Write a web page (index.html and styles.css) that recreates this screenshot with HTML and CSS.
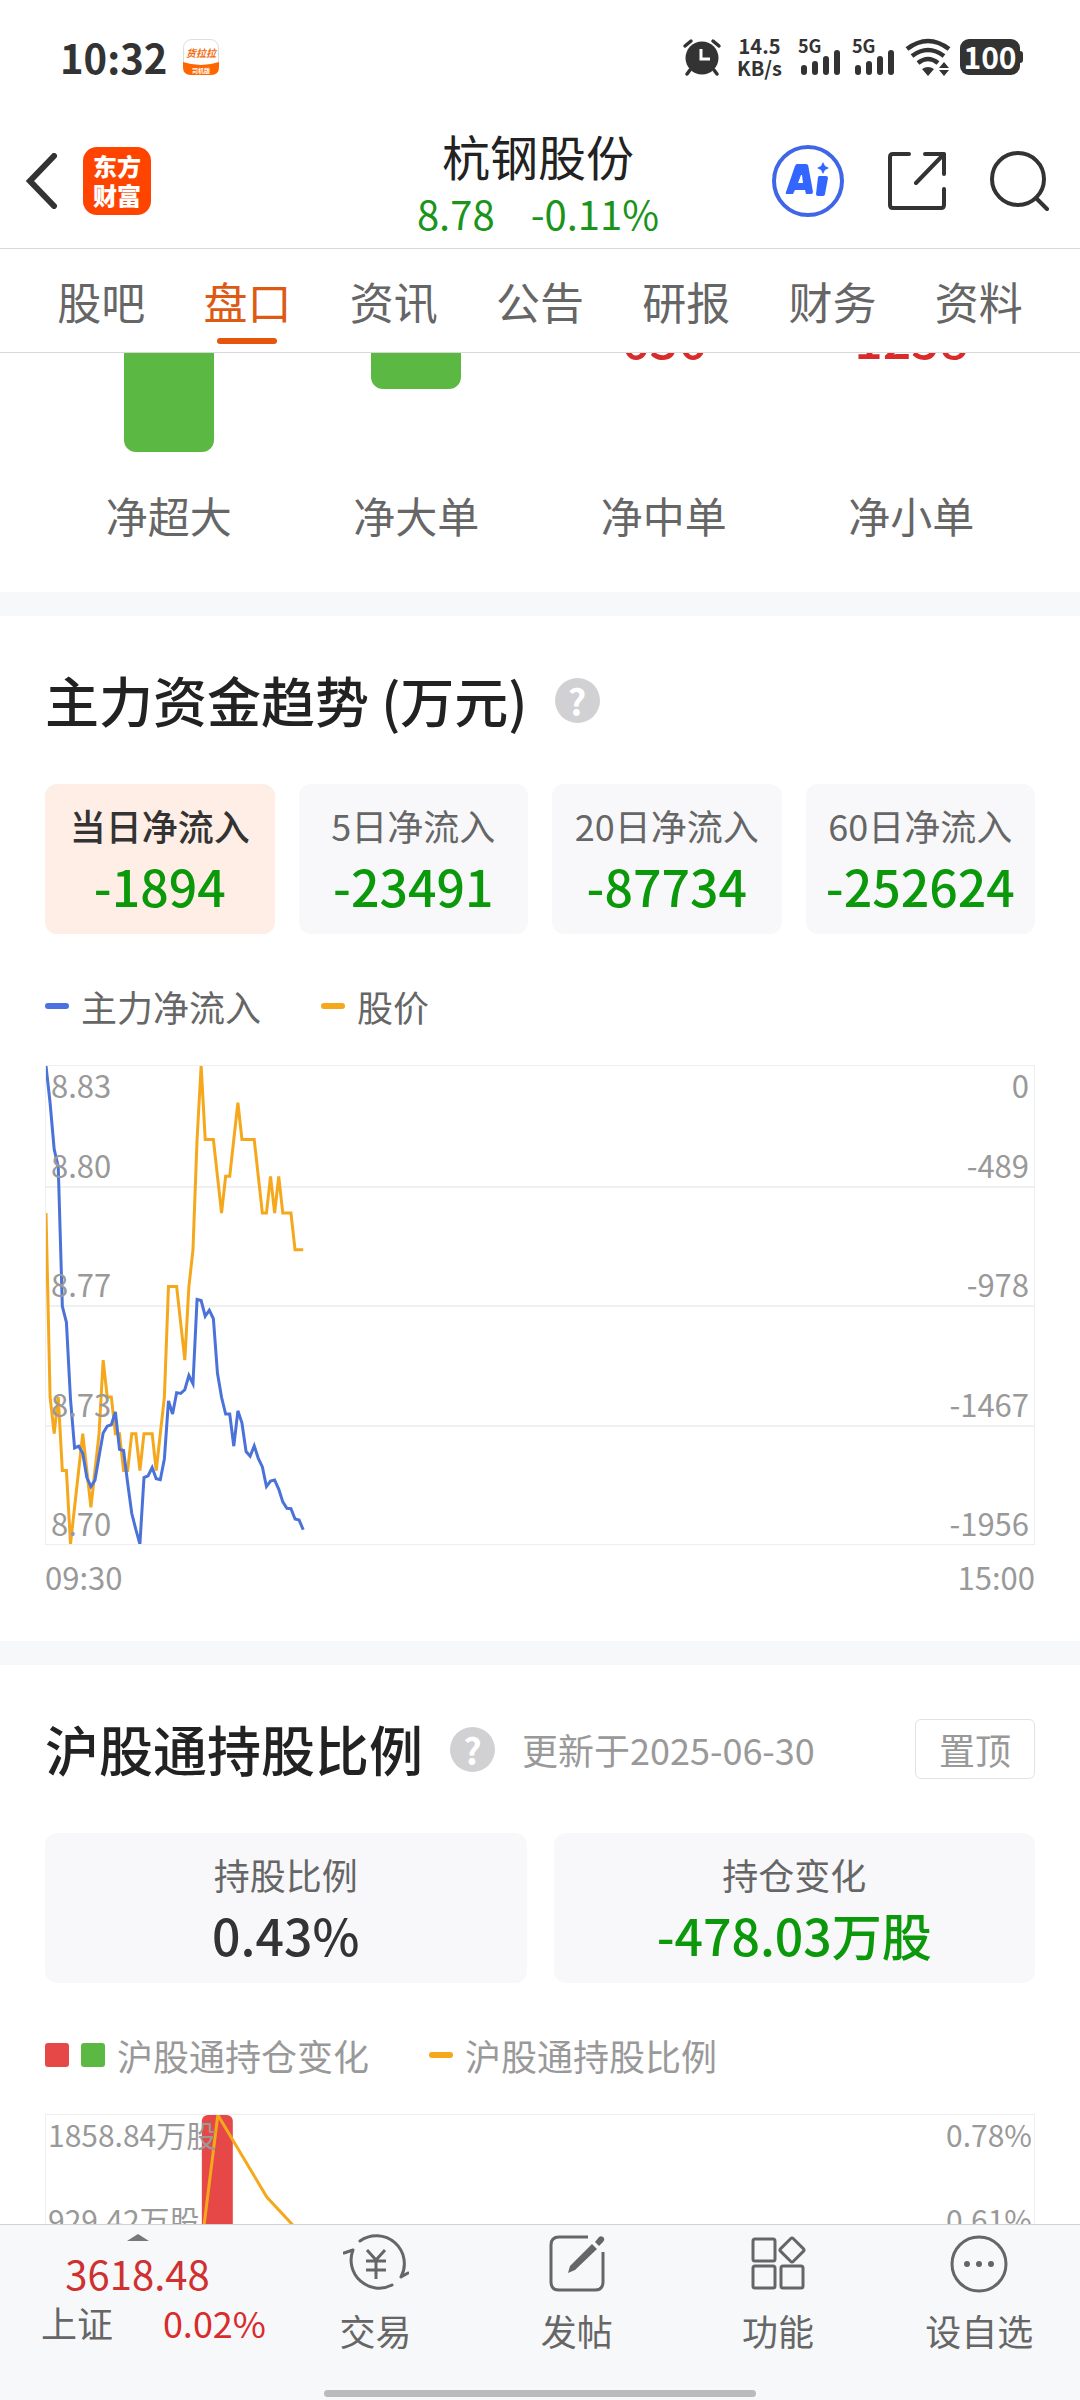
FILE: index.html
```html
<!DOCTYPE html>
<html lang="zh-CN">
<head>
<meta charset="utf-8">
<meta name="viewport" content="width=device-width, initial-scale=1">
<title>杭钢股份 8.78</title>
<link rel="stylesheet" href="styles.css">
</head>
<body>

<div class="status-bar">
  <span class="clock">10:32</span>
  <svg class="app-badge" viewBox="0 0 36 36">
    <rect x="0.5" y="0.5" width="35" height="35" rx="8" fill="#fff" stroke="#ddd"/>
    <path d="M0 23 Q18 29 36 23 V28 Q36 36 28 36 H8 Q0 36 0 28 Z" fill="#f60"/>
    <text x="18" y="18" font-size="10" font-weight="bold" font-style="italic" text-anchor="middle" fill="#f26a0c">货拉拉</text>
    <text x="18" y="34" font-size="6" font-weight="bold" text-anchor="middle" fill="#fff">司机版</text>
  </svg>
  <div class="status-icons">
    <svg width="38" height="38" viewBox="0 0 38 38">
      <circle cx="19" cy="20" r="16.5" fill="#333"/>
      <path d="M2 8 L8 3 M36 8 L30 3 M7 32 L4 36 M31 32 L34 36" stroke="#333" stroke-width="3.5" stroke-linecap="round"/>
      <path d="M18 11 V21 H27" fill="none" stroke="#fff" stroke-width="3"/>
    </svg>
    <span class="net-speed">14.5<br>KB/s</span>
    <svg width="44" height="38" viewBox="0 0 44 38">
      <text x="0" y="15" font-size="18" font-weight="bold" fill="#333">5G</text>
      <path d="M6 30 V34 M17 26 V34 M28 21 V34 M39 15 V34" stroke="#333" stroke-width="6" stroke-linecap="round"/>
    </svg>
    <svg width="44" height="38" viewBox="0 0 44 38">
      <text x="0" y="15" font-size="18" font-weight="bold" fill="#333">5G</text>
      <path d="M6 30 V34 M17 26 V34 M28 21 V34 M39 15 V34" stroke="#333" stroke-width="6" stroke-linecap="round"/>
    </svg>
    <svg width="44" height="38" viewBox="0 0 44 38">
      <g fill="none" stroke="#333" stroke-width="4.5">
        <path d="M1 11 Q22 -5 43 11"/>
        <path d="M6 18 Q22 6 38 18"/>
        <path d="M12 25 Q22 17 32 25"/>
      </g>
      <path d="M16 31 Q22 27 28 31 L22 38 Z M38 24 L43 30 H33 Z M38 38 L43 32 H33 Z" fill="#333"/>
    </svg>
    <span class="battery">100</span>
  </div>
</div>

<header class="top-bar">
  <div class="top-left">
    <button class="icon-button" aria-label="返回">
      <svg width="32" height="56" viewBox="0 0 32 56"><path d="M28 3 L4 28 L28 53" fill="none" stroke="#333" stroke-width="6" stroke-linecap="round"/></svg>
    </button>
    <a class="brand" href="#">东方<br>财富</a>
  </div>
  <div class="stock">
    <h1>杭钢股份</h1>
    <p class="quote"><span>8.78</span><span>-0.11%</span></p>
  </div>
  <div class="top-right">
    <button class="icon-button" aria-label="AI">
      <svg width="72" height="72" viewBox="0 0 72 72">
        <circle cx="36" cy="36" r="34" fill="none" stroke="#4066e8" stroke-width="4"/>
        <path fill="#3366ff" fill-rule="evenodd" d="M25 19 H34 Q36 19 36.300 21 L41 47 Q41 49 39 49 H34 L33 45 H23 L21 49 H15 Q13 49 14 47 L23 21 Q24 19 25 19 Z M29 30 L26 38 H31 L30 30 Z"/>
        <path fill="#3366ff" d="M47 31 H54 Q56 31 56 33 L53 49 Q53 51 51 51 H46 Q44 51 44 49 L46 32 Z M51 17 L53 21 L57 23 L53 25 L51 29 L49 25 L45 23 L49 21 Z"/>
      </svg>
    </button>
    <button class="icon-button" aria-label="分享">
      <svg width="58" height="58" viewBox="0 0 58 58">
        <path d="M21 2 H5 Q2 2 2 5 V53 Q2 56 5 56 H53 Q56 56 56 53 V37 M37 2 H56 V22 M56 2 L28 31" fill="none" stroke="#333" stroke-width="4" stroke-linecap="round" stroke-linejoin="round"/>
      </svg>
    </button>
    <button class="icon-button" aria-label="搜索">
      <svg width="60" height="60" viewBox="0 0 60 60">
        <circle cx="28" cy="28" r="26" fill="none" stroke="#333" stroke-width="4"/>
        <path d="M46 47 L57 58" stroke="#333" stroke-width="4" stroke-linecap="round"/>
      </svg>
    </button>
  </div>
</header>

<nav class="tabs">
  <a href="#">股吧</a>
  <a href="#" class="active">盘口</a>
  <a href="#">资讯</a>
  <a href="#">公告</a>
  <a href="#">研报</a>
  <a href="#">财务</a>
  <a href="#">资料</a>
</nav>

<main>
  <section class="orders">
    <div class="order">
      <div class="order-plot"><div class="order-bar" style="height: 159px"></div></div>
      <span>净超大</span>
    </div>
    <div class="order">
      <div class="order-plot"><div class="order-bar" style="height: 96px"></div></div>
      <span>净大单</span>
    </div>
    <div class="order">
      <div class="order-plot"><b>636</b></div>
      <span>净中单</span>
    </div>
    <div class="order">
      <div class="order-plot"><b>1258</b></div>
      <span>净小单</span>
    </div>
  </section>

  <section class="panel trend">
    <div class="panel-head">
      <h2>主力资金趋势 (万元)</h2>
      <button class="help" aria-label="说明">?</button>
    </div>
    <div class="cards cards-4">
      <button class="card selected"><span>当日净流入</span><b class="down">-1894</b></button>
      <button class="card"><span>5日净流入</span><b class="down">-23491</b></button>
      <button class="card"><span>20日净流入</span><b class="down">-87734</b></button>
      <button class="card"><span>60日净流入</span><b class="down">-252624</b></button>
    </div>
    <div class="legend">
      <span class="legend-item"><i class="dash blue"></i>主力净流入</span>
      <span class="legend-item"><i class="dash orange"></i>股价</span>
    </div>

    <div class="chart">
      <div class="grid-lines"><i></i><i></i><i></i><i></i></div>
      <!-- x: minutes since open, y: 0.01 yuan below 8.83 -->
      <svg class="plot" viewBox="0 0 242 13" preserveAspectRatio="none">
        <polyline class="line orange-line" points="0,4 1,9 2,10 3,9 4,11 5,11 6,13 7,12 8,11 9,10 10,11 11,12 12,11 13,10 14,8 15,9 16,9 17,10 18,10 19,11 20,11 21,10 22,10 23,11 24,10 25,10 26,10 27,11 28,10 29,9 30,6 31,6 32,6 33,7 34,8 35,6 36,5 37,2 38,0 39,2 40,2 41,2 42,3 43,4 44,3 45,3 46,2 47,1 48,2 49,2 50,2 51,2 52,3 53,4 54,4 55,3 56,4 57,3 58,4 59,4 60,4 61,5 62,5 63,5"/>
      </svg>
      <!-- x: minutes since open, y: net outflow -->
      <svg class="plot" viewBox="0 0 242 1339" preserveAspectRatio="none">
        <polyline class="line blue-line" points="0,0 1,103 2,233 3,283 4,673 5,718 6,933 7,1070 8,1065 9,1085 10,1153 11,1178 12,1160 13,1093 14,1028 15,1009 16,1005 17,969 18,1074 19,1077 20,1168 21,1253 22,1298 23,1339 24,1153 25,1148 26,1125 27,1156 28,1159 29,1100 30,938 31,975 32,915 33,917 34,907 35,867 36,890 37,654 38,657 39,701 40,684 41,708 42,861 43,928 44,975 45,975 46,1065 47,966 48,1000 49,1080 50,1093 51,1064 52,1099 53,1123 54,1178 55,1163 56,1160 57,1185 58,1221 59,1239 60,1240 61,1269 62,1272 63,1299"/>
      </svg>
      <div class="axis">
        <div><span>8.83</span><span>0</span></div>
        <div><span>8.80</span><span>-489</span></div>
        <div><span>8.77</span><span>-978</span></div>
        <div><span>8.73</span><span>-1467</span></div>
        <div><span>8.70</span><span>-1956</span></div>
      </div>
    </div>
    <div class="time-axis"><span>09:30</span><span>15:00</span></div>
  </section>

  <section class="panel">
    <div class="panel-head">
      <h2>沪股通持股比例</h2>
      <button class="help" aria-label="说明">?</button>
      <span class="updated">更新于2025-06-30</span>
      <button class="pin">置顶</button>
    </div>
    <div class="cards cards-2">
      <div class="card"><span>持股比例</span><b>0.43%</b></div>
      <div class="card"><span>持仓变化</span><b class="down">-478.03万股</b></div>
    </div>
    <div class="legend light">
      <span class="legend-item"><i class="square red"></i><i class="square green"></i>沪股通持仓变化</span>
      <span class="legend-item"><i class="dash orange"></i>沪股通持股比例</span>
    </div>
    <div class="chart holding">
      <svg class="plot" viewBox="0 0 989 478" preserveAspectRatio="none">
        <rect x="156" y="0" width="31" height="300" rx="6" fill="#e64848"/>
        <polyline class="line orange-line" points="157,120 172,0 221,82 260,124"/>
      </svg>
      <div class="axis">
        <div><span>1858.84万股</span><span>0.78%</span></div>
        <div><span>929.42万股</span><span>0.61%</span></div>
      </div>
    </div>
  </section>
</main>

<footer class="bottom-bar">
  <a class="index" href="#">
    <i class="arrow-up"></i>
    <span class="index-value">3618.48</span>
    <span class="index-row"><span>上证</span><span class="up">0.02%</span></span>
  </a>
  <a class="action" href="#">
    <svg width="66" height="60" viewBox="0 0 66 60" fill="none" stroke="#666" stroke-width="3">
      <path d="M17 7 A28 28 0 0 1 58 43 L65 39 M49 51 A28 28 0 0 1 10 16 L1 19" stroke-linecap="round" stroke-linejoin="round"/>
      <path d="M24 16 L33 26 L42 16 M33 26 V45 M23 27 H43 M23 36 H43"/>
    </svg>
    <span>交易</span>
  </a>
  <a class="action" href="#">
    <svg width="60" height="60" viewBox="0 0 60 60">
      <path d="M41 3 H12 Q4 3 4 11 V48 Q4 56 12 56 H48 Q56 56 56 48 V18" fill="none" stroke="#666" stroke-width="3"/>
      <path d="M45 10 L50 15 L28 36 L21 39 L23 32 Z M48 8 L52 3 Q55 1 57 4 Q58 6 56 8 L52 12 Z" fill="#666"/>
    </svg>
    <span>发帖</span>
  </a>
  <a class="action" href="#">
    <svg width="60" height="60" viewBox="0 0 60 60" fill="none" stroke="#666" stroke-width="3">
      <rect x="5" y="5" width="22" height="22" rx="2"/>
      <rect x="5" y="32" width="22" height="22" rx="2"/>
      <rect x="33" y="32" width="22" height="22" rx="2"/>
      <rect x="35" y="7" width="18" height="18" rx="2" transform="rotate(45 44 16)"/>
    </svg>
    <span>功能</span>
  </a>
  <a class="action" href="#">
    <svg width="60" height="60" viewBox="0 0 60 60">
      <circle cx="30" cy="30" r="27" fill="none" stroke="#666" stroke-width="3"/>
      <g fill="#666"><circle cx="18" cy="30" r="3"/><circle cx="30" cy="30" r="3"/><circle cx="42" cy="30" r="3"/></g>
    </svg>
    <span>设自选</span>
  </a>
  <div class="home-indicator"></div>
</footer>

</body>
</html>
```
FILE: styles.css
```css
* {
  box-sizing: border-box;
}

body {
  margin: 0;
  height: 100vh;
  display: flex;
  flex-direction: column;
  background: #fff;
  color: #333;
  font-family: "Noto Sans CJK SC", sans-serif;
}

h1, h2, p {
  margin: 0;
}

a {
  color: inherit;
  text-decoration: none;
}

button {
  padding: 0;
  border: none;
  background: none;
  color: inherit;
  font-family: inherit;
  cursor: pointer;
}

svg {
  display: block;
}

/* Status bar */
.status-bar {
  height: 114px;
  padding: 0 60px;
  display: flex;
  align-items: center;
  gap: 16px;
}

.clock {
  font-size: 40px;
  font-weight: 700;
}

.app-badge {
  width: 36px;
  height: 36px;
}

.status-icons {
  margin-left: auto;
  display: flex;
  align-items: center;
  gap: 10px;
}

.status-icons svg {
  overflow: visible;
}

.net-speed {
  padding: 0 6px;
  font-size: 20px;
  line-height: 22px;
  font-weight: 700;
  text-align: center;
}

.battery {
  position: relative;
  width: 60px;
  height: 36px;
  border-radius: 9px;
  background: #333;
  color: #fff;
  font-size: 30px;
  line-height: 34px;
  font-weight: 700;
  text-align: center;
}

.battery::after {
  content: "";
  position: absolute;
  top: 12px;
  right: -3px;
  width: 4px;
  height: 12px;
  border-radius: 0 3px 3px 0;
  background: #333;
}

/* Header */
.top-bar {
  height: 135px;
  padding: 0 30px 0 26px;
  display: grid;
  grid-template-columns: 1fr auto 1fr;
  align-items: center;
  border-bottom: 1px solid #d8d8d8;
}

.top-left, .top-right {
  display: flex;
  align-items: center;
  gap: 25px;
}

.top-right {
  justify-content: flex-end;
  gap: 44px;
}

.brand {
  width: 68px;
  height: 68px;
  padding: 4px 0;
  border-radius: 14px;
  background: #ff4400;
  color: #fff;
  font-size: 24px;
  line-height: 29px;
  font-weight: 900;
  text-align: center;
}

.stock {
  padding-top: 3px;
  text-align: center;
}

.stock h1 {
  font-size: 48px;
  line-height: 60px;
  font-weight: 400;
  color: #222;
}

.quote {
  display: flex;
  justify-content: center;
  gap: 36px;
  font-size: 40px;
  line-height: 56px;
  color: #1a941a;
}

/* Tabs */
.tabs {
  padding: 0 28px;
  display: grid;
  grid-template-columns: repeat(7, 1fr);
  border-bottom: 1px solid #d8d8d8;
  color: #666;
}

.tabs a {
  display: flex;
  flex-direction: column;
  align-items: center;
  padding: 18px 0 8px;
  font-size: 44px;
  line-height: 68px;
}

.tabs a::after {
  content: "";
  width: 60px;
  height: 6px;
  margin-top: 3px;
  border-radius: 3px;
}

.tabs .active {
  color: #dd5a14;
}

.tabs .active::after {
  background: #e65509;
}

main {
  flex: 1;
  min-height: 0;
  overflow: hidden;
}

/* Orders */
.orders {
  margin-top: -60px;
  padding: 0 45px 46px;
  display: grid;
  grid-template-columns: repeat(4, 1fr);
}

.order {
  text-align: center;
  font-size: 42px;
  line-height: 62px;
  color: #666;
}

.order-plot {
  height: 191px;
  display: flex;
  justify-content: center;
  align-items: flex-start;
}

.order-bar {
  width: 90px;
  border-radius: 0 0 12px 12px;
  background: #5bb943;
}

.order b {
  padding-top: 10px;
  font-size: 50px;
  line-height: 68px;
  font-weight: 500;
  color: #d92b2b;
}

/* Panels */
.panel {
  padding: 46px 45px 42px;
  border-top: 24px solid #f7f8fa;
}

.panel-head {
  display: flex;
  align-items: center;
  height: 76px;
}

.panel-head h2 {
  font-size: 54px;
  line-height: 76px;
  font-weight: 500;
  color: #222;
}

.help {
  width: 45px;
  height: 45px;
  margin: 0 27px;
  border-radius: 50%;
  background: #d1d1d4;
  color: #fff;
  font-size: 36px;
  line-height: 45px;
  font-weight: 700;
}

.updated {
  font-size: 36px;
  color: #999;
}

.pin {
  width: 120px;
  height: 60px;
  margin-left: auto;
  border: 1px solid #e2e2e2;
  border-radius: 6px;
  font-size: 36px;
  line-height: 56px;
  color: #999;
}

.cards {
  margin-top: 46px;
  display: grid;
  gap: 24px;
}

.cards-4 {
  grid-template-columns: repeat(4, 1fr);
}

.cards-2 {
  grid-template-columns: repeat(2, 1fr);
  gap: 27px;
}

.card {
  height: 150px;
  padding-bottom: 2px;
  border-radius: 12px;
  background: #f8f8fa;
  display: flex;
  flex-direction: column;
  align-items: center;
  justify-content: center;
  font-size: 36px;
  line-height: 54px;
  color: #666;
}

.card b {
  font-size: 50px;
  line-height: 66px;
  font-weight: 500;
  color: #333;
}

.card.selected {
  background: #feeee6;
}

.card.selected span {
  font-weight: 500;
  color: #333;
}

.card .down {
  color: #0b990b;
}

.up {
  color: #d92b2b;
}

.legend {
  margin-top: 45px;
  display: flex;
  gap: 60px;
  font-size: 36px;
  line-height: 54px;
  color: #666;
}

.legend.light {
  color: #999;
}

.legend-item {
  display: flex;
  align-items: center;
  gap: 12px;
}

.dash {
  width: 24px;
  height: 6px;
  border-radius: 3px;
}

.square {
  width: 24px;
  height: 24px;
  border-radius: 3px;
}

.blue { background: #4a72e0; }
.orange { background: #f5a81c; }
.red { background: #e64848; }
.green { background: #5bb943; }

/* Charts: grid, lines and labels share one cell */
.chart {
  height: 480px;
  margin-top: 32px;
  display: grid;
  border: 1px solid #eee;
}

.chart > * {
  grid-area: 1 / 1;
  min-height: 0;
}

.grid-lines {
  display: grid;
  grid-template-rows: repeat(4, 1fr);
}

.grid-lines i + i {
  border-top: 2px solid #f0f0f0;
}

.plot {
  width: 100%;
  height: 478px;
}

.line {
  fill: none;
  stroke-width: 3px;
  vector-effect: non-scaling-stroke;
}

.orange-line { stroke: #f5a81c; }
.blue-line { stroke: #4a72d8; }

.axis {
  padding: 0 5px 3px;
  display: grid;
  grid-template-rows: 37px 80px repeat(3, 1fr);
  font-size: 31px;
  line-height: 36px;
  color: #999;
}

.axis div {
  display: flex;
  justify-content: space-between;
  align-items: flex-end;
}

.time-axis {
  display: flex;
  justify-content: space-between;
  font-size: 31px;
  line-height: 44px;
  padding-top: 10px;
  color: #999;
}

.holding .axis {
  padding: 0 2px;
  grid-template-rows: 37px 85px;
  font-size: 30px;
}

/* Bottom bar */
.bottom-bar {
  flex: none;
  position: relative;
  height: 176px;
  display: grid;
  grid-template-columns: 275px repeat(4, 1fr);
  border-top: 1px solid #d0d3d6;
  background: #f7f8fa;
  color: #666;
  font-size: 36px;
}

.index {
  display: flex;
  flex-direction: column;
  align-items: center;
  padding-top: 9px;
}

.arrow-up {
  border: 11px solid transparent;
  border-top: none;
  border-bottom: 7px solid #777;
}

.index-value {
  margin-top: 7px;
  font-size: 40px;
  line-height: 50px;
  color: #cf3030;
}

.index-row {
  width: 100%;
  padding: 0 9px 0 41px;
  display: flex;
  justify-content: space-between;
  line-height: 48px;
}

.action {
  display: flex;
  flex-direction: column;
  align-items: center;
  gap: 10px;
  padding-top: 9px;
  line-height: 52px;
}

.home-indicator {
  position: absolute;
  bottom: 3px;
  left: 30%;
  width: 40%;
  height: 7px;
  border-radius: 4px;
  background: #bbb;
}
```
